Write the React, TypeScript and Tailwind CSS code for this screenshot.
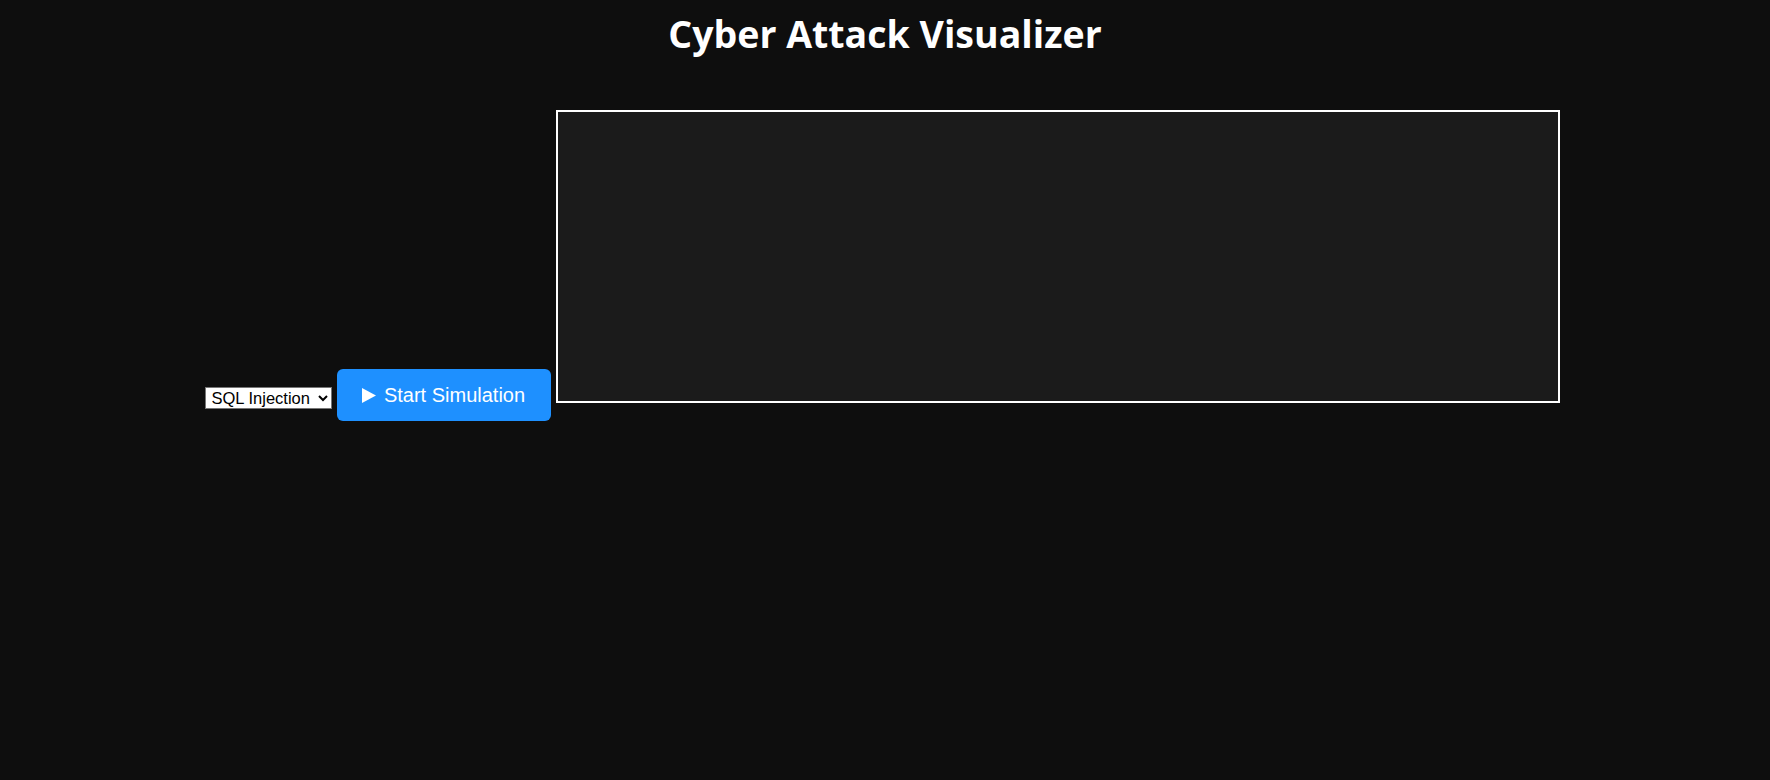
import { useState } from 'react';

export default function App() {
  const [attack, setAttack] = useState('sql');

  return (
    <div className="min-h-[780px] w-full bg-[#0e0e0e] text-white font-['Liberation_Sans',Arial,sans-serif]">
      {/* Header */}
      <h1 className="pt-[12px] text-center text-[37.5px] leading-[44px] font-bold font-['Open_Sans','Lato',sans-serif]">
        Cyber Attack Visualizer
      </h1>

      {/* Controls + canvas */}
      <div className="mt-[54px] flex items-end justify-center gap-[5px] pr-[6px]">
        <select
          value={attack}
          onChange={(e) => setAttack(e.target.value)}
          className="mb-[12px] h-[22px] w-[127px] border border-[#767676] bg-white pl-[2px] text-[16.5px] leading-none text-black"
        >
          <option value="sql">SQL Injection</option>
          <option value="xss">XSS</option>
          <option value="ddos">DDoS</option>
          <option value="phishing">Phishing</option>
        </select>

        <button className="flex h-[52px] w-[214px] items-center justify-center gap-[8px] rounded-[6px] bg-[#1e90ff] text-[20px] text-white">
          <svg viewBox="0 0 14 15" className="h-[15px] w-[14px]" fill="currentColor">
            <path d="M0 0 L14 7.5 L0 15 Z" />
          </svg>
          Start Simulation
        </button>

        <div className="mb-[18px] h-[293px] w-[1004px] border-2 border-white bg-[#1b1b1b]" />
      </div>
    </div>
  );
}
